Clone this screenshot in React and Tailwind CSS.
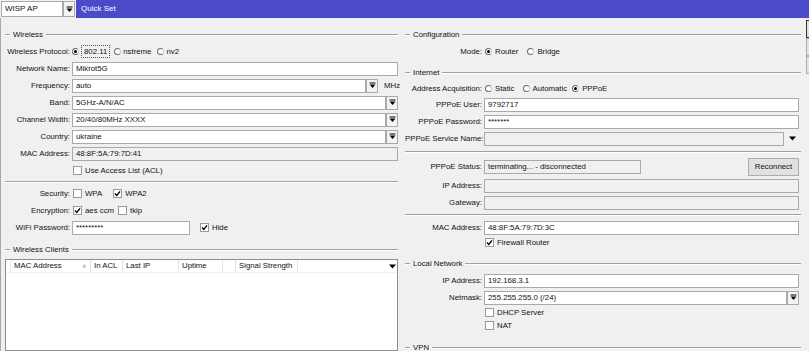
import React from "react";

const DropIcon = () => (
  <svg width="7" height="7" viewBox="0 0 7 7">
    <rect x="0.5" y="0.5" width="6" height="1" fill="#000" />
    <path d="M0.5 2.5 H6.5 L3.5 6 Z" fill="#000" />
  </svg>
);

const DropBox = ({ className = "" }) => (
  <div className={`w-[12px] h-[14px] border border-[#a9a9a9] bg-[#f3f3f3] flex items-center justify-center shrink-0 ${className}`}>
    <DropIcon />
  </div>
);

const Tri = () => (
  <svg width="7" height="5" viewBox="0 0 7 5">
    <path d="M0 0.5 H7 L3.5 4.5 Z" fill="#000" />
  </svg>
);

const Field = ({ value, gray = false, className = "" }) => (
  <div
    className={`h-[14px] border border-[#a9a9a9] flex items-center pl-[3px] overflow-hidden whitespace-nowrap ${gray ? "bg-[#f0f0f0]" : "bg-white"} ${className}`}
  >
    {value}
  </div>
);

const Check = ({ checked = false }) => (
  <span className="w-[9px] h-[9px] border border-[#9a9a9a] bg-white flex items-center justify-center shrink-0">
    {checked && (
      <svg width="7" height="7" viewBox="0 0 7 7">
        <path d="M1 3.6 L2.8 5.4 L6 1.4" stroke="#000" strokeWidth="1.4" fill="none" />
      </svg>
    )}
  </span>
);

const Radio = ({ checked = false }) => (
  <span className="w-[7px] h-[7px] rounded-full border border-[#6e6e6e] border-r-[#c8c8c8] bg-white flex items-center justify-center shrink-0">
    {checked && <span className="w-[3px] h-[3px] rounded-full bg-black" />}
  </span>
);

const Line = ({ className = "" }) => (
  <div className={`h-[2px] border-t border-b border-t-[#a0a0a0] border-b-white ${className}`} />
);

const Legend = ({ children, className = "" }) => (
  <div className={`flex items-center h-[16px] shrink-0 ${className}`}>
    <Line className="w-[5px]" />
    <span className="px-[3px]">{children}</span>
    <Line className="flex-1" />
  </div>
);

const Row = ({ label, lw, h = "h-[17px]", children }) => (
  <div className={`flex items-center shrink-0 ${h}`}>
    <div className={`${lw} shrink-0 text-right pr-[2px] whitespace-nowrap`}>{label}</div>
    <div className="flex-1 flex items-center min-w-0">{children}</div>
  </div>
);

const LW = "w-[71px]";
const RW = "w-[79px]";

export default function App() {
  return (
    <div className="w-[809px] h-[351px] overflow-hidden bg-[#f0f0f0] text-[#111] text-[7.8px] leading-none font-['Liberation_Sans',Arial,sans-serif] flex flex-col">
      {/* Top bar */}
      <div className="h-[18px] flex shrink-0">
        <div className="w-[76px] flex items-center pl-[1px] bg-[#f0f0f0]">
          <div className="w-[62px] h-[16px] border border-[#a9a9a9] bg-white flex items-center pl-[3px] text-[8px]">WISP AP</div>
          <div className="w-[12px] h-[16px] border border-[#a9a9a9] bg-[#f3f3f3] flex items-center justify-center">
            <DropIcon />
          </div>
        </div>
        <div className="flex-1 bg-[#4b4bc9] text-white flex items-center pl-[5px] text-[8px]">Quick Set</div>
      </div>

      <div className="flex flex-1 min-h-0">
        {/* Left panel */}
        <div className="w-[400px] shrink-0 flex flex-col border-l border-[#a8a8a8] pt-[9px]">
          <Legend className="ml-[4px] mr-[2px]">Wireless</Legend>
          <Row label="Wireless Protocol:" lw={LW}>
            <Radio checked />
            <span className="ml-[2px] px-[2px] py-[2px] border border-dotted border-[#555]">802.11</span>
            <span className="ml-[4px]"><Radio /></span>
            <span className="ml-[2px]">nstreme</span>
            <span className="ml-[6px]"><Radio /></span>
            <span className="ml-[2px]">nv2</span>
          </Row>
          <Row label="Network Name:" lw={LW}>
            <Field value="Mikrot5G" className="flex-1 mr-[2px]" />
          </Row>
          <Row label="Frequency:" lw={LW}>
            <Field value="auto" className="flex-1" />
            <DropBox />
            <span className="w-[22px] pl-[6px]">MHz</span>
          </Row>
          <Row label="Band:" lw={LW}>
            <Field value="5GHz-A/N/AC" className="flex-1" />
            <DropBox className="mr-[2px]" />
          </Row>
          <Row label="Channel Width:" lw={LW}>
            <Field value="20/40/80MHz XXXX" className="flex-1" />
            <DropBox className="mr-[2px]" />
          </Row>
          <Row label="Country:" lw={LW}>
            <Field value="ukraine" className="flex-1" />
            <DropBox className="mr-[2px]" />
          </Row>
          <Row label="MAC Address:" lw={LW}>
            <Field value="48:8F:5A:79:7D:41" gray className="flex-1 mr-[2px]" />
          </Row>
          <Row label="" lw={LW}>
            <span className="ml-[1px]"><Check /></span>
            <span className="ml-[3px]">Use Access List (ACL)</span>
          </Row>
          <div className="h-[6px] shrink-0 flex items-center ml-[4px] mr-[2px]">
            <Line className="flex-1" />
          </div>
          <Row label="Security:" lw={LW}>
            <span className="ml-[1px]"><Check /></span>
            <span className="ml-[3px]">WPA</span>
            <span className="ml-[11px]"><Check checked /></span>
            <span className="ml-[3px]">WPA2</span>
          </Row>
          <Row label="Encryption:" lw={LW}>
            <span className="ml-[1px]"><Check checked /></span>
            <span className="ml-[3px]">aes ccm</span>
            <span className="ml-[4px]"><Check /></span>
            <span className="ml-[3px]">tkip</span>
          </Row>
          <Row label="WiFi Password:" lw={LW}>
            <Field value="*********" className="w-[118px]" />
            <span className="ml-[10px]"><Check checked /></span>
            <span className="ml-[3px]">Hide</span>
          </Row>
          <Legend className="ml-[4px] mr-[2px] mt-[6px]">Wireless Clients</Legend>
          {/* table */}
          <div className="ml-[4px] mr-[2px] mt-[1px] flex-1 border border-[#8e8e8e] bg-white flex flex-col">
            <div className="h-[13px] shrink-0 flex items-stretch border-b border-[#f0f0f0]">
              <div className="w-[5px] border-r border-[#e3e3e3]" />
              <div className="w-[80px] border-r border-[#e3e3e3] flex items-center pl-[3px] relative">
                MAC Address
                <span className="absolute right-[4px] top-[3px] text-[6px] text-[#888]">∧</span>
              </div>
              <div className="w-[32px] border-r border-[#e3e3e3] flex items-center pl-[3px]">In ACL</div>
              <div className="w-[56px] border-r border-[#e3e3e3] flex items-center pl-[3px]">Last IP</div>
              <div className="w-[44px] border-r border-[#e3e3e3] flex items-center pl-[3px]">Uptime</div>
              <div className="w-[13px] border-r border-[#e3e3e3]" />
              <div className="w-[62px] border-r border-[#e3e3e3] flex items-center pl-[3px]">Signal Strength</div>
              <div className="flex-1 flex items-center justify-end pr-[1px]">
                <Tri />
              </div>
            </div>
          </div>
        </div>

        {/* Right panel */}
        <div className="w-[396px] shrink-0 ml-[5px] flex flex-col pt-[9px]">
          <Legend>Configuration</Legend>
          <Row label="Mode:" lw={RW}>
            <span className="ml-[1px]"><Radio checked /></span>
            <span className="ml-[3px]">Router</span>
            <span className="ml-[9px]"><Radio /></span>
            <span className="ml-[3px]">Bridge</span>
          </Row>
          <Legend className="mt-[5px]">Internet</Legend>
          <Row label="Address Acquisition:" lw={RW} h="h-[15px]">
            <span className="ml-[1px]"><Radio /></span>
            <span className="ml-[3px]">Static</span>
            <span className="ml-[8px]"><Radio /></span>
            <span className="ml-[3px]">Automatic</span>
            <span className="ml-[5px]"><Radio checked /></span>
            <span className="ml-[3px]">PPPoE</span>
          </Row>
          <Row label="PPPoE User:" lw={RW}>
            <Field value="9792717" className="flex-1 mr-[2px]" />
          </Row>
          <Row label="PPPoE Password:" lw={RW}>
            <Field value="*******" className="flex-1 mr-[2px]" />
          </Row>
          <Row label="PPPoE Service Name:" lw={RW}>
            <Field value="" gray className="flex-1" />
            <span className="w-[17px] flex justify-center"><Tri /></span>
          </Row>
          <div className="h-[10px] shrink-0 flex items-center">
            <Line className="flex-1" />
          </div>
          <Row label="PPPoE Status:" lw={RW} h="h-[20px]">
            <Field value="terminating... - disconnected" gray className="w-[157px]" />
            <div className="flex-1" />
            <div className="w-[51px] h-[18px] mr-[2px] border border-[#adadad] bg-[#e1e1e1] flex items-center justify-center">Reconnect</div>
          </Row>
          <Row label="IP Address:" lw={RW}>
            <Field value="" gray className="flex-1 mr-[2px]" />
          </Row>
          <Row label="Gateway:" lw={RW}>
            <Field value="" gray className="flex-1 mr-[2px]" />
          </Row>
          <div className="h-[8px] shrink-0 flex items-center">
            <Line className="flex-1" />
          </div>
          <Row label="MAC Address:" lw={RW}>
            <Field value="48:8F:5A:79:7D:3C" className="flex-1 mr-[2px]" />
          </Row>
          <Row label="" lw={RW} h="h-[13px]">
            <span className="ml-[1px]"><Check checked /></span>
            <span className="ml-[3px]">Firewall Router</span>
          </Row>
          <Legend className="mt-[7px]">Local Network</Legend>
          <Row label="IP Address:" lw={RW}>
            <Field value="192.168.3.1" className="flex-1 mr-[2px]" />
          </Row>
          <Row label="Netmask:" lw={RW}>
            <Field value="255.255.255.0 (/24)" className="flex-1" />
            <DropBox className="mr-[2px]" />
          </Row>
          <Row label="" lw={RW} h="h-[13px]">
            <span className="ml-[1px]"><Check /></span>
            <span className="ml-[3px]">DHCP Server</span>
          </Row>
          <Row label="" lw={RW} h="h-[13px]">
            <span className="ml-[1px]"><Check /></span>
            <span className="ml-[3px]">NAT</span>
          </Row>
          <Legend className="mt-[8px]">VPN</Legend>
        </div>

        {/* right buttons, mostly cut off */}
        <div className="flex-1 overflow-hidden pl-[5px] pt-[2px] flex flex-col">
          <div className="w-[60px] h-[18px] shrink-0 border border-[#333] bg-[#e1e1e1]" />
          <div className="w-[60px] h-[18px] shrink-0 border border-[#adadad] bg-[#e1e1e1]" />
          <div className="w-[60px] h-[18px] shrink-0 border border-[#adadad] bg-[#e1e1e1]" />
        </div>
      </div>
    </div>
  );
}
